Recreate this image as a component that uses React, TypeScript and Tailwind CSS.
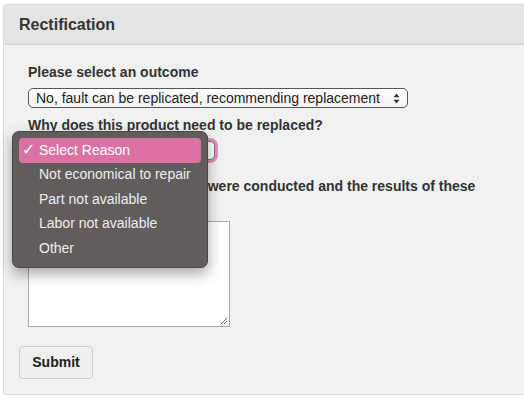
import React from "react";

const UpDown = () => (
  <svg width="7" height="11" viewBox="0 0 7 11" className="shrink-0">
    <path d="M3.5 0.5 L6.5 4.2 L0.5 4.2 Z" fill="#333" />
    <path d="M3.5 10.5 L6.5 6.8 L0.5 6.8 Z" fill="#333" />
  </svg>
);

const reasons = [
  "Select Reason",
  "Not economical to repair",
  "Part not available",
  "Labor not available",
  "Other",
];

const App = () => {
  return (
    <div
      className="relative w-[524px] h-[398px] overflow-hidden bg-white pl-[3px] pt-[4px]"
      style={{ fontFamily: '"Liberation Sans", Arial, sans-serif' }}
    >
      <div className="w-[540px] border border-[#dadada] rounded-[3px] bg-[#f1f1f1]">
        <div className="h-[40px] flex items-center pl-[15px] bg-[#e4e4e4] border-b border-[#d4d4d4]">
          <h2 className="text-[16px] font-bold text-[#333]">Rectification</h2>
        </div>
        <div className="pl-[15px] pt-[19px] pb-[15px]">
          <div className="pl-[9px] flex flex-col">
            <label className="text-[14px] leading-[17px] font-bold text-[#333]">
              Please select an outcome
            </label>
            <div className="mt-[7px] w-[380px] h-[20px] flex items-center justify-between pl-[7px] pr-[7px] border border-[#555] rounded-[5px] bg-gradient-to-b from-white to-[#f3f3f3] text-[14px] text-[#222]">
              <span>No, fault can be replicated, recommending replacement</span>
              <UpDown />
            </div>
            <label className="mt-[9px] text-[14px] leading-[17px] font-bold text-[#333]">
              Why does this product need to be replaced?
            </label>
            <div className="mt-[7px] w-[187px] h-[19px] flex items-center justify-between pl-[7px] pr-[6px] border border-[#777] rounded-[5px] bg-white ring-[3px] ring-[#e58fba] text-[14px] text-[#222]">
              <span>Select Reason</span>
              <UpDown />
            </div>
            <label className="mt-[18px] w-[470px] text-[14px] leading-[17px] font-bold text-[#333]">
              Please detail the tests that were conducted and the results of these tests
            </label>
            <div className="relative mt-[9px] w-[202px] h-[106px] bg-white border border-[#a9a9a9]">
              <svg width="8" height="8" viewBox="0 0 8 8" className="absolute right-[1px] bottom-[1px]">
                <path d="M7 1 L1 7 M7 4 L4 7" stroke="#666" strokeWidth="1" />
              </svg>
            </div>
          </div>
          <button className="mt-[19px] w-[74px] h-[33px] rounded-[4px] border border-[#cfcfcf] bg-[#efefef] text-[14px] font-bold text-[#222]">
            Submit
          </button>
        </div>
      </div>

      <div className="absolute left-[12px] top-[131px] w-[196px] h-[137px] rounded-[7px] bg-[#615d5c] border border-[#4a4747] shadow-[0_6px_14px_rgba(0,0,0,0.35)] p-[6px] text-[14px]">
        {reasons.map((r, i) => (
          <div
            key={r}
            className={`relative h-[24.5px] flex items-center pl-[20px] rounded-[4px] ${
              i === 0 ? "bg-[#dc72a3] text-white" : "text-[#eeeeee]"
            }`}
          >
            {i === 0 && (
              <span className="absolute left-[3px] text-[16px] font-['DejaVu_Sans',sans-serif]">✓</span>
            )}
            {r}
          </div>
        ))}
      </div>
    </div>
  );
};

export default App;
